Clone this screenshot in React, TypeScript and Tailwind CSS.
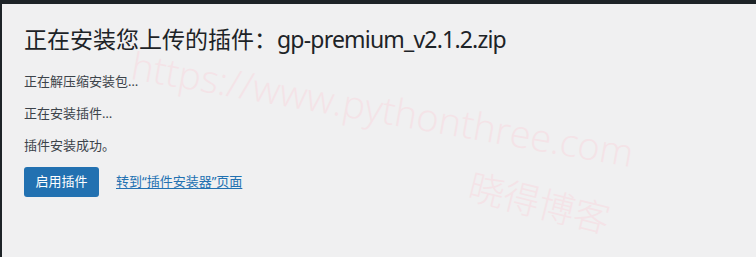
export default function App() {
  const font = { fontFamily: '"Noto Sans", "Noto Sans CJK SC", sans-serif' };
  return (
    <div
      className="relative w-[756px] h-[257px] overflow-hidden bg-[#f0f0f1] border-t-4 border-l-2 border-[#1d2327] text-[#3c434a]"
      style={font}
    >
      <div className="pointer-events-none absolute left-[130px] top-[32px] rotate-[10deg] origin-left text-[38px] font-light text-[#f4e3e7]" style={{ fontFamily: '"Open Sans", "Liberation Sans", sans-serif' }}>
        https://www.pythonthree.com
      </div>
      <div className="pointer-events-none absolute left-[468px] top-[152px] rotate-[14deg] origin-left text-[36px] font-light text-[#f4e3e7]" style={{ fontFamily: '"Noto Sans CJK SC", sans-serif' }}>
        晓得博客
      </div>
      <div className="relative flex flex-col pl-[22px] pt-[20px]">
        <h1 className="text-[23px] leading-[30px] font-normal text-[#1d2327]">
          正在安装您上传的插件：<span className="tracking-[-0.8px]">gp-premium_v2.1.2.zip</span>
        </h1>
        <div className="mt-[17px] flex flex-col gap-[12px] text-[13px] leading-[20px]">
          <p>正在解压缩安装包…</p>
          <p>正在安装插件…</p>
          <p>插件安装成功。</p>
        </div>
        <div className="mt-[12px] flex items-center">
          <a className="flex h-[30px] w-[75px] items-center justify-center rounded-[3px] bg-[#2271b1] text-[13px] text-white">
            启用插件
          </a>
          <a className="ml-[17px] text-[13px] text-[#2271b1] underline underline-offset-2">
            转到“插件安装器”页面
          </a>
        </div>
      </div>
    </div>
  );
}
